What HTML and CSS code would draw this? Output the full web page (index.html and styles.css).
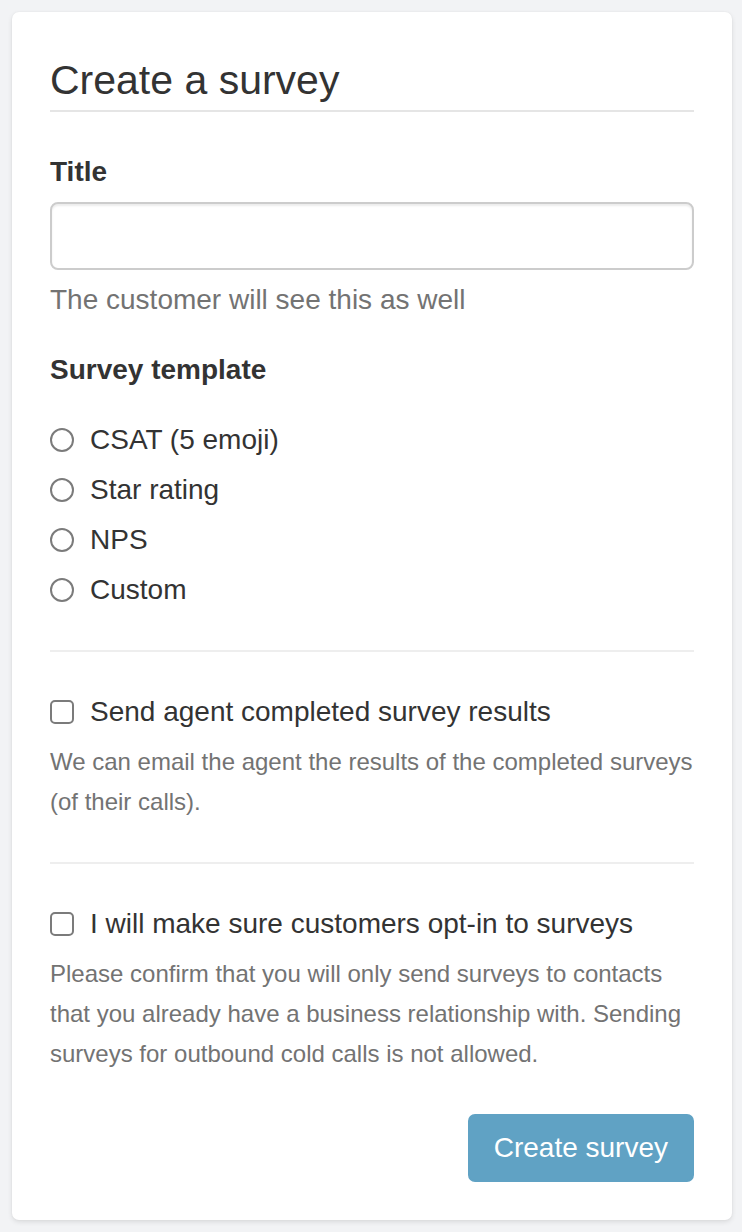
FILE: index.html
```html
<!DOCTYPE html>
<html lang="en">
<head>
<meta charset="utf-8">
<title>Create a survey</title>
<link rel="stylesheet" href="styles.css">
</head>
<body>
<div class="page">
  <form class="card">
    <h1 class="legend">Create a survey</h1>

    <div class="group">
      <label class="label" for="title">Title</label>
      <input class="input" id="title" type="text">
      <p class="help help-lg">The customer will see this as well</p>
    </div>

    <div class="group">
      <div class="label">Survey template</div>
      <div class="options">
        <label class="option"><input class="radio" type="radio" name="tpl"><span>CSAT (5 emoji)</span></label>
        <label class="option"><input class="radio" type="radio" name="tpl"><span>Star rating</span></label>
        <label class="option"><input class="radio" type="radio" name="tpl"><span>NPS</span></label>
        <label class="option"><input class="radio" type="radio" name="tpl"><span>Custom</span></label>
      </div>
    </div>

    <hr class="rule">

    <div class="check-group">
      <label class="option"><input class="check" type="checkbox"><span>Send agent completed survey results</span></label>
      <p class="help">We can email the agent the results of the completed surveys (of their calls).</p>
    </div>

    <hr class="rule">

    <div class="check-group">
      <label class="option"><input class="check" type="checkbox"><span>I will make sure customers opt-in to surveys</span></label>
      <p class="help">Please confirm that you will only send surveys to contacts that you already have a business relationship with. Sending surveys for outbound cold calls is not allowed.</p>
    </div>

    <div class="actions">
      <button class="btn" type="submit">Create survey</button>
    </div>
  </form>
</div>
</body>
</html>
```

FILE: styles.css
```css
* { box-sizing: border-box; }

html, body {
  margin: 0;
  padding: 0;
  background: #f2f3f5;
}

body {
  font-family: "Liberation Sans", Arial, Helvetica, sans-serif;
  font-size: 28px;
  line-height: 40px;
  color: #333333;
}

.page {
  padding: 12px 10px 12px 12px;
}

.card {
  background: #ffffff;
  border-radius: 7px;
  box-shadow: 0 2px 5px rgba(0, 0, 0, 0.10), 0 0 2px rgba(0, 0, 0, 0.05);
  padding: 38px;
  display: flex;
  flex-direction: column;
}

.legend {
  margin: 0 0 40px;
  font-size: 41px;
  font-weight: normal;
  line-height: 60px;
  color: #333333;
  border-bottom: 2px solid #e5e5e5;
}

.group {
  display: flex;
  flex-direction: column;
}

.group + .group {
  margin-top: 30px;
}

.label {
  font-weight: bold;
  margin-bottom: 10px;
}

.input {
  height: 68px;
  width: 100%;
  border: 2px solid #cccccc;
  border-radius: 8px;
  padding: 12px 24px;
  font: inherit;
  color: #555;
  background: #fff;
  box-shadow: inset 0 2px 2px rgba(0, 0, 0, 0.075);
  outline: none;
}

.help {
  margin: 10px 0 0;
  font-size: 24px;
  line-height: 40px;
  color: #737373;
}

.help-lg {
  font-size: 28px;
}

.options {
  display: flex;
  flex-direction: column;
  gap: 10px;
  margin-top: 20px;
}

.option {
  display: flex;
  align-items: center;
  gap: 16px;
  height: 40px;
  font-weight: normal;
  cursor: pointer;
}

.radio,
.check {
  -webkit-appearance: none;
  appearance: none;
  margin: 0;
  width: 24px;
  height: 24px;
  flex: none;
  border: 2px solid #7b7b7b;
  background: #fff;
}

.radio { border-radius: 50%; }
.check { border-radius: 5px; }

.rule {
  border: 0;
  border-top: 2px solid #eeeeee;
  margin: 40px 0;
  height: 0;
}

.check-group {
  display: flex;
  flex-direction: column;
}

.actions {
  display: flex;
  justify-content: flex-end;
  margin-top: 40px;
}

.btn {
  height: 68px;
  padding: 12px 24px;
  font: inherit;
  color: #ffffff;
  background: #60a2c4;
  border: 2px solid #60a2c4;
  border-radius: 7px;
}
```
